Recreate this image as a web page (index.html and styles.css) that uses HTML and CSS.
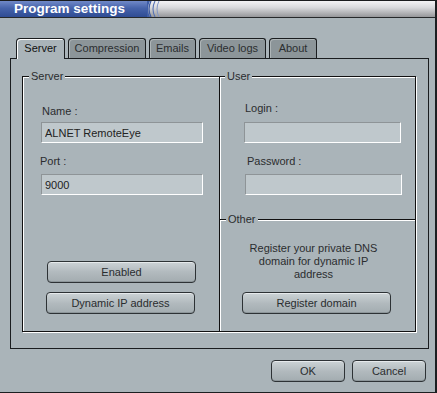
FILE: index.html
```html
<!DOCTYPE html>
<html lang="en">
<head>
  <meta charset="UTF-8">
  <title>Program settings</title>
  <link rel="stylesheet" href="styles.css">
</head>
<body>
  <div class="window">
    <div class="titlebar">
      <div class="title-main">Program settings</div>
      <div class="title-rest">
        <svg class="swoosh" width="14" height="16" viewBox="0 0 14 16">
          <path d="M0 0 H3 Q-1 8 3 16 H0 Z" fill="#3f5ea8"/>
          <path d="M4 0 Q0 8 4 16" fill="none" stroke="#3d5ba4" stroke-width="1.3"/>
          <path d="M8 0 Q4 8 8 16" fill="none" stroke="#5672b4" stroke-width="1.1"/>
          <path d="M12 0 Q8 8 12 16" fill="none" stroke="#8296c6" stroke-width="1"/>
        </svg>
      </div>
    </div>

    <div class="content">
      <div class="tabs">
        <div class="tab active tab-server">Server</div>
        <div class="tab tab-compression">Compression</div>
        <div class="tab tab-emails">Emails</div>
        <div class="tab tab-video">Video logs</div>
        <div class="tab tab-about">About</div>
      </div>

      <div class="panel">
        <div class="groups">
          <div class="group-server">
            <span class="legend">Server</span>
            <label class="field-label name-label">Name :</label>
            <input class="input name-input" type="text" value="ALNET RemoteEye">
            <label class="field-label port-label">Port :</label>
            <input class="input port-input" type="text" value="9000">
            <button class="btn btn-enabled">Enabled</button>
            <button class="btn btn-dynamic">Dynamic IP address</button>
          </div>

          <div class="group-right">
            <div class="group-user">
              <span class="legend legend-user">User</span>
              <label class="field-label login-label">Login :</label>
              <input class="input login-input" type="text" value="">
              <label class="field-label password-label">Password :</label>
              <input class="input password-input" type="password" value="">
            </div>
            <div class="group-other">
              <span class="legend">Other</span>
              <p class="other-text">Register your private DNS<br>domain for dynamic IP<br>address</p>
              <button class="btn btn-register">Register domain</button>
            </div>
          </div>
        </div>
      </div>
    </div>

    <div class="footer">
      <button class="btn btn-dialog">OK</button>
      <button class="btn btn-dialog">Cancel</button>
    </div>
  </div>
</body>
</html>
```

FILE: styles.css
```css
* {
  box-sizing: border-box;
}

body {
  margin: 0;
  font-family: 'Liberation Sans', Arial, sans-serif;
  font-size: 11px;
  color: #222;
}

.window {
  width: 437px;
  height: 393px;
  background: #aab4b9;
  border-right: 2px solid #1c1f21;
  border-bottom: 1px solid #1c1f21;
  display: flex;
  flex-direction: column;
}

/* title bar */
.titlebar {
  height: 18px;
  display: flex;
  border-top: 1px solid #1a1c1e;
  border-bottom: 1px solid #26292b;
}

.title-main {
  width: 147px;
  padding-left: 14px;
  color: #fff;
  font-weight: bold;
  font-size: 13.5px;
  line-height: 16px;
  background: linear-gradient(#7089c8, #4663ab 45%, #2f4c93);
}

.title-rest {
  flex: 1;
  background: linear-gradient(#f3f3f5, #d9dadd 40%, #96979a);
}

.swoosh {
  display: block;
}

/* tabs */
.content {
  padding: 20px 6px 0 10px;
}

.tabs {
  display: flex;
  gap: 3px;
  padding-left: 6px;
  height: 20px;
  position: relative;
  z-index: 1;
}

.tab {
  height: 20px;
  border: 1px solid #1a1d1f;
  border-bottom: none;
  border-radius: 4px 3px 0 0;
  background: #8c9599;
  color: #2b2e30;
  text-align: center;
  line-height: 19px;
  box-shadow: inset 1px 1px 0 rgba(255, 255, 255, 0.3);
}

.tab.active {
  height: 21px;
  background: #aab4b9;
  color: #111;
  box-shadow: inset 1px 1px 0 #fff;
}

.tab-server { width: 49px; }
.tab-compression { width: 78px; }
.tab-emails { width: 47px; }
.tab-video { width: 67px; }
.tab-about { width: 48px; }

/* panel and groups */
.panel {
  height: 291px;
  border: 1px solid #1a1d1f;
  padding: 17px 0 0 11px;
}

.groups {
  width: 394px;
  height: 256px;
  border: 1px solid #111;
  box-shadow: inset 1px 1px 0 #fff, 1px 1px 0 #fff;
  display: flex;
}

.group-server {
  width: 197px;
  border-right: 1px solid #111;
  position: relative;
  display: flex;
  flex-direction: column;
  align-items: flex-start;
  padding-bottom: 17px;
}

.group-right {
  flex: 1;
  display: flex;
  flex-direction: column;
  box-shadow: inset 1px 0 0 #fff;
}

.group-user {
  height: 142px;
  position: relative;
  display: flex;
  flex-direction: column;
  align-items: flex-start;
}

.group-other {
  flex: 1;
  border-top: 1px solid #111;
  box-shadow: inset 1px 1px 0 #fff;
  position: relative;
  display: flex;
  flex-direction: column;
  align-items: flex-start;
}

.legend {
  position: absolute;
  top: -7px;
  left: 6px;
  padding: 0 2px;
  line-height: 13px;
  background: #aab4b9;
  color: #2a2d2f;
}

.legend-user {
  left: 5px;
}

.field-label {
  display: block;
  line-height: 13px;
  color: #2a2d2f;
}

.input {
  display: block;
  height: 21px;
  border: 1px solid;
  border-color: #8e9497 #fff #fff #8e9497;
  background: #bfc8cc;
  font: inherit;
  color: #222;
  padding: 0 0 0 3px;
  outline: none;
}

.name-label { margin: 28px 0 0 19px; }
.name-input { margin: 4px 0 0 18px; width: 162px; }
.port-label { margin: 12px 0 0 17px; }
.port-input { margin: 6px 0 0 18px; width: 162px; }

.login-label { margin: 25px 0 0 25px; }
.login-input { margin: 7px 0 0 24px; width: 157px; }
.password-label { margin: 12px 0 0 27px; }
.password-input { margin: 6px 0 0 25px; width: 157px; }

.other-text {
  margin: 0;
  padding: 22px 8px 0 0;
  width: 100%;
  text-align: center;
  line-height: 13px;
  color: #2a2d2f;
}

/* buttons */
.btn {
  display: block;
  height: 22px;
  padding: 0;
  border: 1px solid #2d3235;
  border-radius: 4px;
  background: linear-gradient(#ccd3d6, #b2babe 50%, #a3acb0);
  box-shadow: inset 0 1px 0 #e6eaec, inset 0 -1px 0 #8d969a;
  font: inherit;
  color: #2a2d2f;
  line-height: 19px;
  cursor: pointer;
}

.btn-enabled { width: 149px; margin: auto 0 0 24px; }
.btn-dynamic { width: 149px; margin: 9px 0 0 23px; }
.btn-register { width: 149px; margin: 11px 0 0 22px; }

.footer {
  display: flex;
  justify-content: flex-end;
  gap: 7px;
  padding: 11px 9px 0 0;
}

.btn-dialog {
  width: 74px;
}
```
